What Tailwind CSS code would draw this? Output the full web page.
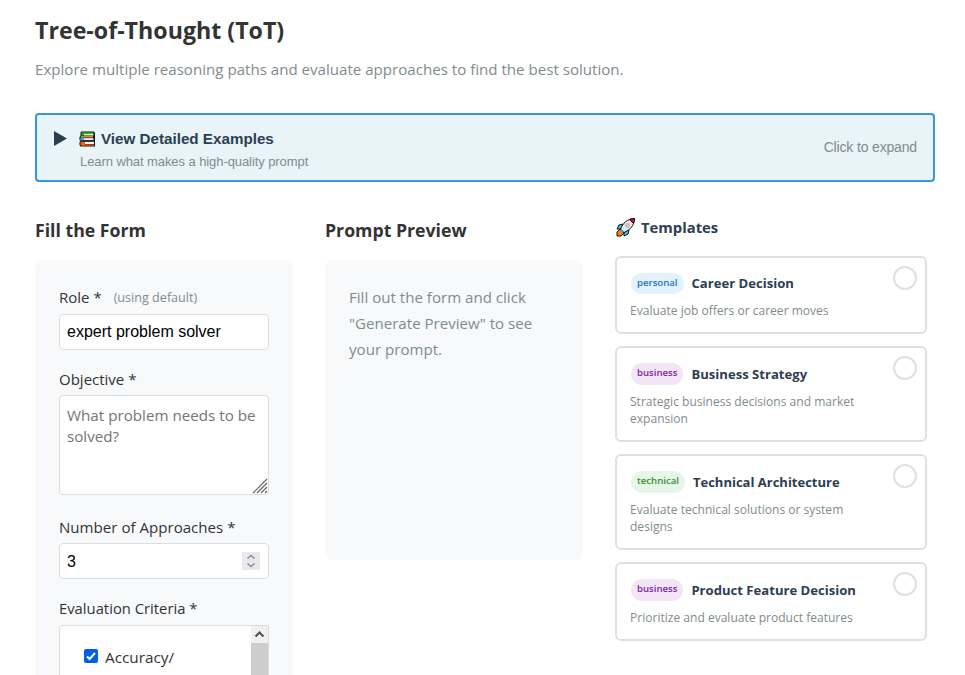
<!DOCTYPE html>
<html lang="en">
<head>
  <meta charset="UTF-8" />
  <meta name="viewport" content="width=device-width, initial-scale=1.0" />
  <title>Tree-of-Thought (ToT)</title>
  <script src="https://cdn.jsdelivr.net/npm/@tailwindcss/browser@4"></script>
</head>
<body class="h-[675px] overflow-hidden bg-white pr-[30px] pl-[35px] font-['Open_Sans','Noto_Sans',sans-serif] text-[15px] text-[#333]">
  <h1 class="pt-[11px] text-[23.2px] leading-[38px] font-bold whitespace-nowrap">Tree-of-Thought (ToT)</h1>
  <p class="mt-[7px] text-[15.1px] leading-[26px] whitespace-nowrap text-[#7f8c8d]">Explore multiple reasoning paths and evaluate approaches to find the best solution.</p>

  <!-- Examples toggle -->
  <button class="mt-[31px] flex h-[69px] w-full items-center justify-between rounded border-2 border-[#3498db] bg-[#e8f4f8] px-4 text-left font-['Liberation_Sans',Arial,sans-serif]">
    <span class="flex pt-[5px]">
      <svg class="mt-[4px] h-[15px] w-[14px]" viewBox="0 0 14 15"><path d="M1 0L14 7.5L1 15Z" fill="#2c3e50"/></svg>
      <span class="ml-[13px] block">
        <span class="flex h-6 items-center text-[15.2px] font-bold text-[#2c3e50]">
          <svg class="mr-[5px] ml-[-1px] h-[16px] w-[17px]" viewBox="0 0 17 16">
            <path d="M2 .5H15L16 2V15.500H1.500L.5 14V11L1.500 10L.5 9V6L1.500 5V2Z" fill="#111"/>
            <path d="M2.500 1.300h12v1.500h-12z" fill="#16c60c"/>
            <path d="M5 2.800h9.500v1.700H5z" fill="#f4f4e0"/>
            <path d="M2.500 2.800h2.500v1.700H2.500z" fill="#16c60c"/>
            <path d="M2 5.300h12v1.200H2z" fill="#ffc83d"/>
            <path d="M1.300 6.500h3.200v3H1.300z" fill="#3a96dd"/>
            <path d="M4.500 7.200h10v1.900h-10z" fill="#f2f2f2"/>
            <path d="M1.500 10.800h4.500v4H2.500L1.500 13.800z" fill="#f7630c"/>
            <path d="M6 10.800h9v2.200H6z" fill="#f2f2f2"/>
            <path d="M6 13.400h9v1.300H6z" fill="#f7630c"/>
          </svg>
          <span>View Detailed Examples</span>
        </span>
        <span class="block h-[22px] text-[13px] leading-[22px] tracking-[-0.08px] text-[#7f8c8d]">Learn what makes a high-quality prompt</span>
      </span>
    </span>
    <span class="text-[14px] tracking-[-0.16px] text-[#7f8c8d]">Click to expand</span>
  </button>

  <div class="flex gap-8">
    <!-- Form -->
    <section class="w-[258px] shrink-0">
      <h2 class="mt-[33px] text-[17.7px] leading-[30px] font-bold">Fill the Form</h2>
      <div class="mt-[15px] h-[415px] overflow-hidden rounded-t-lg bg-[#f8f9fb] px-6 pt-6">
        <label class="flex h-[26px] items-center whitespace-nowrap">Role * <span class="ml-3 pt-[3px] text-[12.6px] text-[#7f8c8d]">(using default)</span></label>
        <input type="text" value="expert problem solver" class="mt-1 block h-9 w-[210px] rounded border border-[#ddd] bg-white px-[7px] font-['Liberation_Sans',Arial,sans-serif] text-[16px] text-black">

        <label class="mt-4 block leading-[26px]">Objective *</label>
        <div class="relative mt-[3px]">
          <textarea placeholder="What problem needs to be solved?" class="block h-[100px] w-[210px] resize-none overflow-hidden rounded border border-[#ddd] bg-white px-[7px] py-[9px] text-[15.2px] leading-[21px] placeholder:text-[#757575]"></textarea>
          <svg class="absolute right-[1px] bottom-[1px] h-[16px] w-[16px]" viewBox="0 0 16 16" fill="none" stroke="#666" stroke-width="1.200"><path d="M1 15L15 1M5 15L15 5M9 15L15 9M13 15L15 13"/></svg>
        </div>

        <label class="mt-[19px] block text-[15.1px] leading-[26px]">Number of Approaches *</label>
        <div class="mt-[3px] flex h-9 w-[210px] items-center justify-between rounded border border-[#ddd] bg-white pr-2 pl-[7px] font-['Liberation_Sans',Arial,sans-serif] text-[16px] text-black">
          <span class="pt-px">3</span>
          <svg class="h-[18px] w-[18px] bg-[#e9e9ed]" viewBox="0 0 18 18" fill="none" stroke="#8f8f9d" stroke-width="1.600"><path d="M5.500 6.500L9 3.500L12.500 6.500M5.500 11.500L9 14.500L12.500 11.500"/></svg>
        </div>

        <label class="mt-4 block text-[14.8px] leading-[26px]">Evaluation Criteria *</label>
        <div class="mt-1 flex h-[150px] w-[210px] justify-between overflow-hidden rounded-l border border-[#ddd] bg-white">
          <label class="flex items-start pt-[18px] pl-6">
            <svg class="mt-[5px] mr-[7px] h-[14px] w-[14px]" viewBox="0 0 14 14"><rect width="14" height="14" rx="2" fill="#0060df"/><path d="M3 7.500L5.600 10L11 4" fill="none" stroke="#fff" stroke-width="2"/></svg>
            <span class="text-[15.3px] leading-[26px]">Accuracy/</span>
          </label>
          <div class="w-[17px] bg-[#cdcdcd]">
            <svg class="block h-[17px] w-[17px] bg-[#f0f0f0]" viewBox="0 0 17 17" fill="none" stroke="#505050" stroke-width="2"><path d="M4.500 10.500L8.500 6.500L12.500 10.500"/></svg>
          </div>
        </div>
      </div>
    </section>

    <!-- Preview -->
    <section class="w-[258px] shrink-0">
      <h2 class="mt-[33px] text-[17.7px] leading-[30px] font-bold">Prompt Preview</h2>
      <div class="mt-[15px] h-[300px] rounded-lg bg-[#f8f9fb] p-6 text-[15.1px] leading-[26px] text-[#7f8c8d]">Fill out the form and click<br>"Generate Preview" to see<br>your prompt.</div>
    </section>

    <!-- Templates -->
    <section class="w-[312px] shrink-0">
      <h3 class="mt-[32px] flex h-[26px] items-center text-[14.8px] font-bold text-[#2c3e50]">
        <svg class="mr-[5px] ml-[1px] h-[20px] w-[20px]" viewBox="0 0 20 20" stroke="#111" stroke-width="1" stroke-linejoin="round">
          <path d="M7 7L3 8L1 12L5 12Z" fill="#3ccbf4"/>
          <path d="M13 13L12 17L8 19L8 15Z" fill="#3ccbf4"/>
          <path d="M4 12L1 15L1 19L5 19L8 16Z" fill="#f7830c"/>
          <path d="M4.500 12C7 6 11 2 18.500 1.500C18 9 14 13 8 15.500Z" fill="#e8e8e8"/>
          <path d="M13.500 2.500C15 1.800 17 1.500 18.500 1.500C18.500 3 18.200 5 17.500 6.500Z" fill="#e81224"/>
          <circle cx="11.500" cy="8.500" r="1.800" fill="#d0d0d0" stroke="#aaa"/>
          <path d="M5 12L8 15L6 15.500L4.500 14Z" fill="#3a96dd" stroke="none"/>
        </svg>
        <span>Templates</span>
      </h3>
      <div class="mt-4 flex flex-col gap-3">
        <div class="relative h-[78px] rounded-md border-2 border-[#e0e0e0] px-[13px] py-[14px]">
          <div class="flex h-[22px] items-center">
            <span class="mr-2 ml-px flex h-[21px] items-center rounded-xl bg-[#e3f2fd] px-1.5 text-[9.6px] font-semibold text-[#1976d2]">personal</span>
            <h4 class="pt-px text-[13.1px] font-bold text-[#2c3e50]">Career Decision</h4>
          </div>
          <p class="mt-[8px] text-[12.05px] leading-[17px] text-[#7f8c8d]">Evaluate job offers or career moves</p>
          <span class="absolute top-2 right-2 h-6 w-6 rounded-full border-2 border-[#e0e0e0] bg-white"></span>
        </div>
        <div class="relative h-[96px] rounded-md border-2 border-[#e0e0e0] px-[13px] py-[14px]">
          <div class="flex h-[23px] items-center">
            <span class="mr-2 ml-px flex h-[22px] items-center rounded-xl bg-[#f3e5f5] px-1.5 text-[9.6px] font-semibold text-[#7b1fa2]">business</span>
            <h4 class="pt-[2px] text-[13.1px] font-bold text-[#2c3e50]">Business Strategy</h4>
          </div>
          <p class="mt-[8px] text-[12.05px] leading-[17px] text-[#7f8c8d]">Strategic business decisions and market<br>expansion</p>
          <span class="absolute top-2 right-2 h-6 w-6 rounded-full border-2 border-[#e0e0e0] bg-white"></span>
        </div>
        <div class="relative h-[96px] rounded-md border-2 border-[#e0e0e0] px-[13px] py-[14px]">
          <div class="flex h-[23px] items-center">
            <span class="mr-2 ml-px flex h-[22px] items-center rounded-xl bg-[#e8f5e9] px-1.5 text-[9.6px] font-semibold text-[#388e3c]">technical</span>
            <h4 class="pt-[2px] text-[13px] font-bold text-[#2c3e50]">Technical Architecture</h4>
          </div>
          <p class="mt-[8px] text-[12.05px] leading-[17px] text-[#7f8c8d]">Evaluate technical solutions or system<br>designs</p>
          <span class="absolute top-2 right-2 h-6 w-6 rounded-full border-2 border-[#e0e0e0] bg-white"></span>
        </div>
        <div class="relative h-[79px] rounded-md border-2 border-[#e0e0e0] px-[13px] py-[14px]">
          <div class="flex h-[23px] items-center">
            <span class="mr-2 ml-px flex h-[22px] items-center rounded-xl bg-[#f3e5f5] px-1.5 text-[9.6px] font-semibold text-[#7b1fa2]">business</span>
            <h4 class="pt-[2px] text-[13.1px] font-bold text-[#2c3e50]">Product Feature Decision</h4>
          </div>
          <p class="mt-[8px] text-[12.05px] leading-[17px] text-[#7f8c8d]">Prioritize and evaluate product features</p>
          <span class="absolute top-2 right-2 h-6 w-6 rounded-full border-2 border-[#e0e0e0] bg-white"></span>
        </div>
      </div>
    </section>
  </div>
</body>
</html>
